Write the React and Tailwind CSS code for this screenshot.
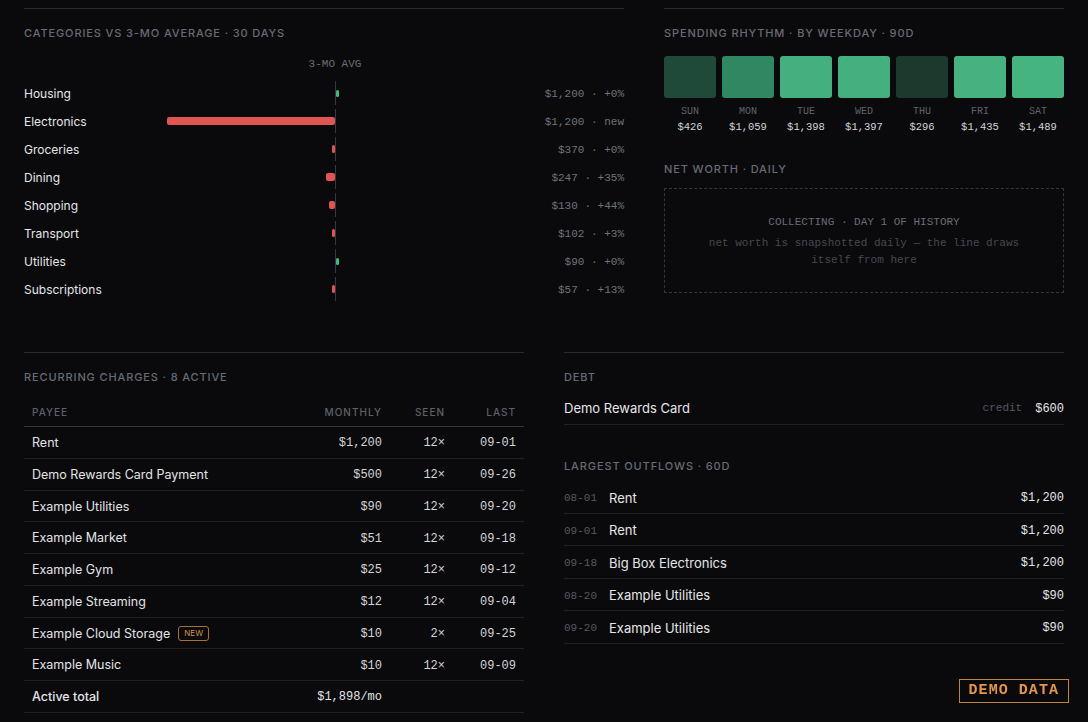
import React from 'react';

const mono = "font-['Liberation_Mono','DejaVu_Sans_Mono',monospace]";
const sans = "font-['Inter','Noto_Sans',sans-serif]";

const categories = [
  { name: 'Housing', amt: '$1,200', delta: '+0%', dir: 'up', w: 3 },
  { name: 'Electronics', amt: '$1,200', delta: 'new', dir: 'down', w: 168 },
  { name: 'Groceries', amt: '$370', delta: '+0%', dir: 'down', w: 3 },
  { name: 'Dining', amt: '$247', delta: '+35%', dir: 'down', w: 9 },
  { name: 'Shopping', amt: '$130', delta: '+44%', dir: 'down', w: 6 },
  { name: 'Transport', amt: '$102', delta: '+3%', dir: 'down', w: 3 },
  { name: 'Utilities', amt: '$90', delta: '+0%', dir: 'up', w: 3 },
  { name: 'Subscriptions', amt: '$57', delta: '+13%', dir: 'down', w: 3 },
];

const weekdays = [
  { d: 'SUN', v: '$426', c: 'bg-[#1f4a39]' },
  { d: 'MON', v: '$1,059', c: 'bg-[#2f8862]' },
  { d: 'TUE', v: '$1,398', c: 'bg-[#44b07f]' },
  { d: 'WED', v: '$1,397', c: 'bg-[#44b07f]' },
  { d: 'THU', v: '$296', c: 'bg-[#1c392d]' },
  { d: 'FRI', v: '$1,435', c: 'bg-[#45b280]' },
  { d: 'SAT', v: '$1,489', c: 'bg-[#46b481]' },
];

const recurring = [
  { payee: 'Rent', monthly: '$1,200', seen: '12×', last: '09-01' },
  { payee: 'Demo Rewards Card Payment', monthly: '$500', seen: '12×', last: '09-26' },
  { payee: 'Example Utilities', monthly: '$90', seen: '12×', last: '09-20' },
  { payee: 'Example Market', monthly: '$51', seen: '12×', last: '09-18' },
  { payee: 'Example Gym', monthly: '$25', seen: '12×', last: '09-12' },
  { payee: 'Example Streaming', monthly: '$12', seen: '12×', last: '09-04' },
  { payee: 'Example Cloud Storage', monthly: '$10', seen: '2×', last: '09-25', isNew: true },
  { payee: 'Example Music', monthly: '$10', seen: '12×', last: '09-09' },
];

const outflows = [
  { date: '08-01', name: 'Rent', amt: '$1,200' },
  { date: '09-01', name: 'Rent', amt: '$1,200' },
  { date: '09-18', name: 'Big Box Electronics', amt: '$1,200' },
  { date: '08-20', name: 'Example Utilities', amt: '$90' },
  { date: '09-20', name: 'Example Utilities', amt: '$90' },
];

function Label({ children }) {
  return (
    <div className={`${sans} text-[11px] leading-[18px] font-medium uppercase tracking-[0.08em] text-[#686b73]`}>
      {children}
    </div>
  );
}

export default function App() {
  return (
    <div className={`${sans} min-h-screen bg-[#0a0a0d] text-[#e4e4e7] px-6 pt-2 pb-6`}>
      {/* top row */}
      <div className="flex gap-10">
        <section className="w-[600px] border-t border-[#2a2b31] pt-[15px]">
          <Label>Categories vs 3-mo average · 30 days</Label>
          <div className="flex mt-[15px]">
            <div className="w-[143px]" />
            <div className={`${mono} w-[336px] text-center text-[11px] leading-[14px] text-[#6a6d75]`}>3-MO AVG</div>
          </div>
          <div className="mt-[8px]">
            {categories.map((c) => (
              <div key={c.name} className="flex items-center h-[28px]">
                <div className="w-[143px] pt-[2px] text-[12px] text-[#e6e6e8]">{c.name}</div>
                <div className="w-[336px] flex items-center h-[24px]">
                  <div className="w-[168px] h-full flex items-center justify-end">
                    {c.dir === 'down' && (
                      <div className="h-2 rounded-[2px] bg-[#e05454]" style={{ width: c.w }} />
                    )}
                  </div>
                  <div className="w-[168px] h-full flex items-center border-l border-[#363945]">
                    {c.dir === 'up' && (
                      <div className="h-[7px] rounded-[2px] bg-[#3fbd7c]" style={{ width: c.w }} />
                    )}
                  </div>
                </div>
                <div className={`${mono} flex-1 pt-[2px] text-right text-[11px] text-[#707379]`}>
                  {c.amt} · {c.delta}
                </div>
              </div>
            ))}
          </div>
        </section>

        <section className="w-[400px] border-t border-[#2a2b31] pt-[15px]">
          <Label>Spending rhythm · by weekday · 90d</Label>
          <div className="grid grid-cols-7 gap-[6px] mt-[14px]">
            {weekdays.map((w) => (
              <div key={w.d} className="flex flex-col items-center">
                <div className={`w-full h-[42px] rounded-[3px] ${w.c}`} />
                <div className={`${mono} mt-[7px] text-[10px] leading-[14px] text-[#5f626a]`}>{w.d}</div>
                <div className={`${mono} text-[10.5px] leading-[16px] text-[#d4d4d8]`}>{w.v}</div>
              </div>
            ))}
          </div>
          <div className="mt-[25px]">
            <Label>Net worth · daily</Label>
          </div>
          <div className="mt-[10px] h-[105px] border border-dashed border-[#34363e] flex flex-col items-center justify-center text-center">
            <div className={`${mono} pt-[3px] text-[11px] leading-[14px] text-[#6a6d75]`}>COLLECTING · DAY 1 OF HISTORY</div>
            <div className={`${mono} mt-[6px] text-[11px] leading-[17px] text-[#45484f] w-[330px]`}>
              net worth is snapshotted daily — the line draws itself from here
            </div>
          </div>
        </section>
      </div>

      {/* bottom row */}
      <div className="flex gap-10 mt-[49px]">
        <section className="w-[500px] border-t border-[#2a2b31] pt-[15px]">
          <Label>Recurring charges · 8 active</Label>
          <div className="mt-3">
            <div className="flex items-center h-[29px] border-b border-[#34363d] text-[10px] font-medium uppercase tracking-[0.1em] text-[#5e6168]">
              <div className="flex-1 pl-2">Payee</div>
              <div className="w-[100px] pr-2 text-right">Monthly</div>
              <div className="w-[63px] pr-2 text-right">Seen</div>
              <div className="w-[71px] pr-2 text-right">Last</div>
            </div>
            {recurring.map((r) => (
              <div key={r.payee} className="flex items-center h-[31.75px] pt-[2px] border-b border-[#1e2026]">
                <div className="flex-1 pl-2 text-[12.5px] text-[#e4e4e7] flex items-center gap-2">
                  {r.payee}
                  {r.isNew && (
                    <span className="border border-[#a8713a] rounded-[3px] px-[5px] text-[8px] leading-[13px] text-[#d68f48] tracking-[0.02em]">
                      NEW
                    </span>
                  )}
                </div>
                <div className={`${mono} w-[100px] pr-2 text-right text-[12px] text-[#d4d4d8]`}>{r.monthly}</div>
                <div className={`${mono} w-[63px] pr-2 text-right text-[12px] text-[#d4d4d8]`}>{r.seen}</div>
                <div className={`${mono} w-[71px] pr-2 text-right text-[12px] text-[#d4d4d8]`}>{r.last}</div>
              </div>
            ))}
            <div className="flex items-center h-[31.75px] pt-[2px] border-b border-[#1e2026]">
              <div className="flex-1 pl-2 text-[12.5px] font-medium text-[#e4e4e7]">Active total</div>
              <div className={`${mono} w-[100px] pr-2 text-right text-[12px] text-[#e4e4e7]`}>$1,898/mo</div>
              <div className="w-[63px]" />
              <div className="w-[71px]" />
            </div>
          </div>
        </section>

        <section className="w-[500px] border-t border-[#2a2b31] pt-[15px]">
          <Label>Debt</Label>
          <div className="mt-[3px] h-[36px] pt-[4px] flex items-center border-b border-[#1e2026]">
            <div className="flex-1 text-[13px] text-[#e6e6e8]">Demo Rewards Card</div>
            <span className={`${mono} text-[11px] text-[#55585f] mr-[13px]`}>credit</span>
            <span className={`${mono} text-[12px] text-[#e4e4e7]`}>$600</span>
          </div>
          <div className="mt-[32px]">
            <Label>Largest outflows · 60d</Label>
          </div>
          <div className="mt-[6px]">
            {outflows.map((o, i) => (
              <div key={i} className="flex items-center h-[32.5px] pt-[3px] border-b border-[#1e2026]">
                <div className={`${mono} w-[45px] text-[11px] text-[#55585f]`}>{o.date}</div>
                <div className="flex-1 text-[13px] text-[#e6e6e8]">{o.name}</div>
                <div className={`${mono} text-[12px] text-[#e4e4e7]`}>{o.amt}</div>
              </div>
            ))}
          </div>
        </section>
      </div>

      <div className={`${mono} fixed bottom-[19px] right-[19px] border border-[#c2843f] px-[9px] py-0 text-[15px] leading-[22px] font-bold tracking-[0.07em] text-[#e3964b]`}>
        DEMO DATA
      </div>
    </div>
  );
}
